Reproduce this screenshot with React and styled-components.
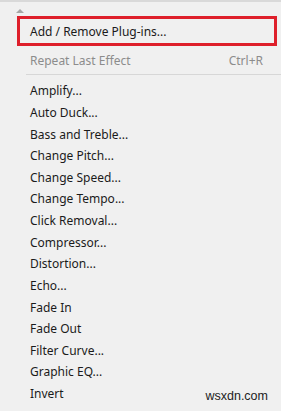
import React from 'react';
import styled, { createGlobalStyle } from 'styled-components';

const Global = createGlobalStyle`
  html, body {
    margin: 0;
    padding: 0;
    background: #f0f0f0;
  }
  body {
    font-family: "Segoe UI", "Noto Sans", sans-serif;
    font-size: 12px;
    color: #1b1b1b;
  }
`;

const Menu = styled.div`
  position: relative;
  width: 281px;
  height: 411px;
  box-sizing: border-box;
  border-top: 2px solid #d9d9d9;
  background: #f0f0f0;
  overflow: hidden;
`;

const ArrowRow = styled.div`
  height: 14px;
  padding-left: 16px;
  display: flex;
  align-items: flex-end;
  padding-bottom: 0;
  box-sizing: border-box;
  padding-top: 7px;
`;

const Arrow = styled.div`
  width: 0;
  height: 0;
  border-left: 4px solid transparent;
  border-right: 4px solid transparent;
  border-bottom: 4px solid #a6a6a6;
  align-self: flex-start;
`;

const Marked = styled.div`
  margin: 0 4px 0 17px;
  height: 30px;
  box-sizing: border-box;
  border: 3px solid #de1f2b;
  padding-left: 10px;
  display: flex;
  align-items: center;
`;

const Row = styled.div`
  height: ${p => p.$h || 21.64}px;
  padding: 0 18px 0 30px;
  display: flex;
  align-items: center;
  justify-content: space-between;
  color: ${p => (p.$disabled ? '#8c8c8c' : '#1b1b1b')};
`;

const Separator = styled.div`
  height: 1px;
  margin: ${p => p.$m || '0'} 0 ${p => p.$m || '0'} 26px;
  background: #d7d7d7;
`;

const Watermark = styled.div`
  position: absolute;
  right: 13px;
  bottom: 8px;
  font-family: "Liberation Sans", Arial, sans-serif;
  font-size: 12.5px;
  color: #222;
`;

const effects = [
  'Amplify...',
  'Auto Duck...',
  'Bass and Treble...',
  'Change Pitch...',
  'Change Speed...',
  'Change Tempo...',
  'Click Removal...',
  'Compressor...',
  'Distortion...',
  'Echo...',
  'Fade In',
  'Fade Out',
  'Filter Curve...',
  'Graphic EQ...',
  'Invert',
];

const App = () =>
  <>
    <Global />
    <Menu>
      <ArrowRow>
        <Arrow />
      </ArrowRow>
      <Marked>Add / Remove Plug-ins...</Marked>
      <Row $disabled $h={28}>
        <span>Repeat Last Effect</span>
        <span>Ctrl+R</span>
      </Row>
      <Separator />
      <div style={{ height: 5 }} />
      {effects.map(e => <Row key={e}>{e}</Row>)}
      <Watermark>wsxdn.com</Watermark>
    </Menu>
  </>;

export default App;
